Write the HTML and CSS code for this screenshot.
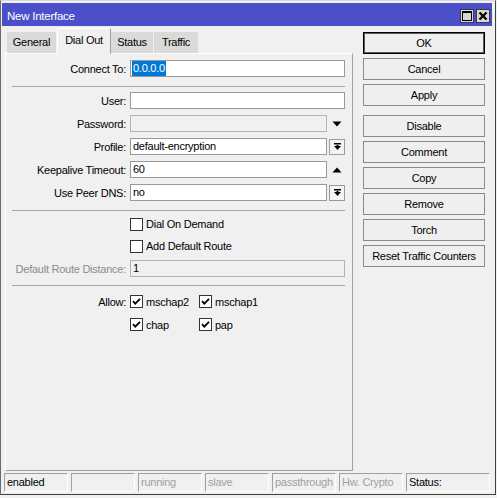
FILE: index.html
```html
<!DOCTYPE html>
<html>
<head>
<meta charset="utf-8">
<link rel="stylesheet" href="styles.css">
</head>
<body>
<div class="window">
  <div class="titlebar">
    <span class="title">New Interface</span>
    <div class="tbtns">
      <span class="tbtn"><svg width="12" height="12" viewBox="0 0 12 12"><rect x="1.5" y="1.5" width="9" height="9" fill="none" stroke="#000"/><rect x="1" y="1" width="10" height="2" fill="#000"/></svg></span>
      <span class="tbtn"><svg width="12" height="12" viewBox="0 0 12 12"><path d="M2.5 2.5 L9.5 9.5 M9.5 2.5 L2.5 9.5" stroke="#000" stroke-width="2.2"/></svg></span>
    </div>
  </div>
  <div class="main">
    <div class="left">
      <div class="tabs">
        <div class="tab w-general">General</div>
        <div class="tab sel w-dial">Dial Out</div>
        <div class="tab w-status">Status</div>
        <div class="tab w-traffic">Traffic</div>
      </div>
      <div class="panel">
        <div class="row">
          <span class="lbl">Connect To:</span>
          <span class="inp"><span class="hl">0.0.0.0</span></span>
        </div>
        <div class="sep"></div>
        <div class="row">
          <span class="lbl">User:</span>
          <span class="inp"></span>
        </div>
        <div class="row">
          <span class="lbl">Password:</span>
          <span class="inp short dis"></span>
          <span class="slot"><svg width="10" height="6" viewBox="0 0 10 6"><polygon points="0.5,0.5 9.5,0.5 5,5.5" fill="#000"/></svg></span>
        </div>
        <div class="row">
          <span class="lbl">Profile:</span>
          <span class="inp short">default-encryption</span>
          <span class="slot dd"><svg width="9" height="9" viewBox="0 0 9 9"><rect x="1" y="1" width="7" height="1.5" fill="#000"/><polygon points="1,4 8,4 4.5,8" fill="#000"/><rect x="3.5" y="3" width="2" height="2" fill="#000"/></svg></span>
        </div>
        <div class="row">
          <span class="lbl">Keepalive Timeout:</span>
          <span class="inp short">60</span>
          <span class="slot"><svg width="10" height="6" viewBox="0 0 10 6"><polygon points="0.5,5.5 9.5,5.5 5,0.5" fill="#000"/></svg></span>
        </div>
        <div class="row">
          <span class="lbl">Use Peer DNS:</span>
          <span class="inp short">no</span>
          <span class="slot dd"><svg width="9" height="9" viewBox="0 0 9 9"><rect x="1" y="1" width="7" height="1.5" fill="#000"/><polygon points="1,4 8,4 4.5,8" fill="#000"/><rect x="3.5" y="3" width="2" height="2" fill="#000"/></svg></span>
        </div>
        <div class="sep"></div>
        <div class="row crow">
          <span class="lbl"></span>
          <span class="opt"><span class="cb"></span>Dial On Demand</span>
        </div>
        <div class="row crow">
          <span class="lbl"></span>
          <span class="opt"><span class="cb"></span>Add Default Route</span>
        </div>
        <div class="row">
          <span class="lbl gray">Default Route Distance:</span>
          <span class="inp dis">1</span>
        </div>
        <div class="sep sep3"></div>
        <div class="row">
          <span class="lbl">Allow:</span>
          <span class="opt"><span class="cb"><svg width="11" height="11" viewBox="0 0 11 11"><path d="M2 5.2 L4.3 7.6 L9 2.8" fill="none" stroke="#000" stroke-width="1.8"/></svg></span>mschap2</span>
          <span class="opt"><span class="cb"><svg width="11" height="11" viewBox="0 0 11 11"><path d="M2 5.2 L4.3 7.6 L9 2.8" fill="none" stroke="#000" stroke-width="1.8"/></svg></span>mschap1</span>
        </div>
        <div class="row">
          <span class="lbl"></span>
          <span class="opt"><span class="cb"><svg width="11" height="11" viewBox="0 0 11 11"><path d="M2 5.2 L4.3 7.6 L9 2.8" fill="none" stroke="#000" stroke-width="1.8"/></svg></span>chap</span>
          <span class="opt"><span class="cb"><svg width="11" height="11" viewBox="0 0 11 11"><path d="M2 5.2 L4.3 7.6 L9 2.8" fill="none" stroke="#000" stroke-width="1.8"/></svg></span>pap</span>
        </div>
      </div>
    </div>
    <div class="buttons">
      <div class="btn ok">OK</div>
      <div class="btn">Cancel</div>
      <div class="btn group-end">Apply</div>
      <div class="btn">Disable</div>
      <div class="btn">Comment</div>
      <div class="btn">Copy</div>
      <div class="btn">Remove</div>
      <div class="btn">Torch</div>
      <div class="btn">Reset Traffic Counters</div>
    </div>
  </div>
  <div class="statusbar">
    <div class="cell">enabled</div>
    <div class="cell"></div>
    <div class="cell gray">running</div>
    <div class="cell gray">slave</div>
    <div class="cell gray">passthrough</div>
    <div class="cell gray">Hw. Crypto</div>
    <div class="cell wide">Status:</div>
  </div>
</div>
</body>
</html>
```

FILE: styles.css
```css
html, body {
  margin: 0;
  padding: 0;
  background: #f0f0f0;
}
body {
  font-family: "Liberation Sans", Arial, sans-serif;
  font-size: 11px;
  letter-spacing: -0.25px;
  color: #000;
}
.window {
  width: 496px;
  height: 495px;
  box-sizing: border-box;
  border-top: 1px solid #d8d8d8;
  border-left: 1px solid #6a6a6a;
  border-right: 1px solid #404040;
  border-bottom: 1px solid #404040;
  padding: 2px 3px 2px 1px;
  background: #f0f0f0;
}
.titlebar {
  height: 23px;
  background: #4b4fc9;
  display: flex;
  justify-content: space-between;
  align-items: center;
  padding: 0 2px 0 5px;
}
.title {
  color: #fff;
  font-size: 11.5px;
  padding-top: 3px;
}
.tbtns {
  display: flex;
  gap: 2px;
  align-self: flex-start;
  margin-top: 6px;
}
.tbtn {
  width: 14px;
  height: 14px;
  box-sizing: border-box;
  border: 1px solid #3a3a3a;
  background: #d6d6d6;
  display: flex;
  align-items: center;
  justify-content: center;
}
.main {
  margin-top: 2px;
  height: 443px;
  display: flex;
}
.left {
  margin-left: 3px;
  width: 348px;
  display: flex;
  flex-direction: column;
}
.tabs {
  height: 25px;
  display: flex;
  align-items: flex-end;
  padding-left: 2px;
}
.tab {
  height: 21px;
  box-sizing: border-box;
  background: #dadada;
  display: flex;
  align-items: center;
  justify-content: center;
  margin-right: 1px;
  padding-bottom: 1px;
}
.tab.sel {
  height: 26px;
  margin-bottom: -1px;
  background: #f0f0f0;
  border-top: 1px solid #fff;
  border-left: 1px solid #fff;
  border-right: 1px solid #a0a0a0;
  position: relative;
  z-index: 1;
  padding-bottom: 4px;
  margin-right: 0;
}
.w-general { width: 49px; margin-right: 1px; }
.w-dial { width: 54px; }
.w-status { width: 42px; }
.w-traffic { width: 44px; }
.panel {
  height: 418px;
  box-sizing: border-box;
  border-top: 1px solid #fff;
  border-left: 1px solid #fff;
  border-right: 1px solid #a0a0a0;
  border-bottom: 1px solid #a0a0a0;
  padding: 3px 7px 0 0;
}
.row {
  height: 23px;
  display: flex;
  align-items: center;
}
.crow {
  height: 22px;
}
.lbl {
  width: 120px;
  margin-right: 4px;
  text-align: right;
  flex: none;
  white-space: nowrap;
}
.gray {
  color: #a0a0a0;
}
.lbl.gray {
  color: #8c8c8c;
}
.inp {
  width: 215px;
  height: 17px;
  box-sizing: border-box;
  border: 1px solid #9a9a9a;
  background: #fff;
  padding-left: 2px;
  line-height: 15px;
  white-space: nowrap;
  flex: none;
}
.inp.short {
  width: 197px;
}
.inp.dis {
  background: #f0f0f0;
  border-color: #b4b4b4;
}
.hl {
  display: inline-block;
  background: #0078d7;
  color: #fff;
  line-height: 15px;
  padding-right: 1px;
  margin-left: -1px;
  padding-left: 1px;
}
.slot {
  width: 16px;
  height: 16px;
  margin-left: 2px;
  box-sizing: border-box;
  display: flex;
  align-items: center;
  justify-content: center;
  flex: none;
}
.slot.dd {
  border: 1px solid #9a9a9a;
  background: #f4f4f4;
}
.sep {
  margin: 6px 0 2px 6px;
  border-top: 1px solid #a8a8a8;
}
.sep3 {
  margin-top: 5px;
  margin-bottom: 4px;
}
.opt {
  width: 69px;
  display: flex;
  align-items: center;
  white-space: nowrap;
  flex: none;
}
.cb {
  width: 13px;
  height: 13px;
  box-sizing: border-box;
  border: 1px solid #333;
  background: #fff;
  margin-right: 3px;
  display: flex;
  align-items: center;
  justify-content: center;
  flex: none;
}
.buttons {
  margin-left: 10px;
  width: 122px;
  padding-top: 4px;
  display: flex;
  flex-direction: column;
}
.btn {
  height: 22px;
  box-sizing: border-box;
  border: 1px solid #8a8a8a;
  background: #efefef;
  display: flex;
  align-items: center;
  justify-content: center;
  margin-bottom: 4px;
  white-space: nowrap;
}
.btn.ok {
  border: 1px solid #000;
  box-shadow: inset 0 0 0 1px #5a5a5a;
}
.btn.group-end {
  margin-bottom: 9px;
}
.statusbar {
  margin-top: 2px;
  margin-left: 2px;
  height: 19px;
  display: flex;
  gap: 3px;
}
.cell {
  width: 64px;
  height: 19px;
  box-sizing: border-box;
  border-top: 1px solid #a0a0a0;
  border-left: 1px solid #a0a0a0;
  border-right: 1px solid #fff;
  border-bottom: 1px solid #fff;
  padding-left: 2px;
  line-height: 17px;
  white-space: nowrap;
  overflow: hidden;
}
.cell.wide {
  width: 84px;
}
```
